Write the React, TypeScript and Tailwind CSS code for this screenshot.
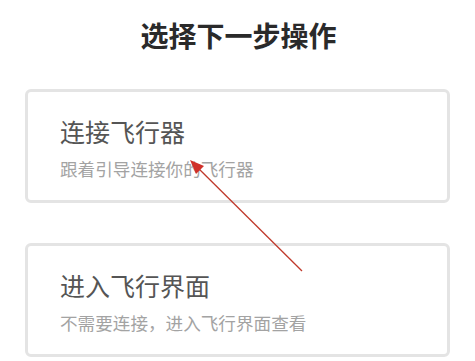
import React from 'react';

interface Option {
  title: string;
  desc: string;
}

const options: Option[] = [
  { title: '连接飞行器', desc: '跟着引导连接你的飞行器' },
  { title: '进入飞行界面', desc: '不需要连接，进入飞行界面查看' },
];

const App: React.FC = () => {
  return (
    <div
      className="relative w-[475px] h-[361px] bg-white overflow-hidden"
      style={{ fontFamily: '"Noto Sans CJK SC", "Noto Sans", sans-serif' }}
    >
      <h1 className="pt-[17px] text-center text-[28px] leading-[36px] font-bold text-[#2a2a2a] pl-[2px]">
        选择下一步操作
      </h1>

      <div className="mt-[36px] px-[25px] flex flex-col gap-[40px]">
        {options.map((opt) => (
          <div
            key={opt.title}
            className="h-[114px] border-[3px] border-[#e4e4e4] rounded-[6px] bg-white pl-[32px] pt-[23px]"
          >
            <div className="text-[25px] leading-[33px] text-[#555555]">{opt.title}</div>
            <div className="mt-[9px] text-[17.6px] leading-[24px] text-[#a3a3a3]">{opt.desc}</div>
          </div>
        ))}
      </div>

      {/* red annotation arrow */}
      <svg className="absolute left-0 top-0 pointer-events-none" width="475" height="361">
        <line x1="302" y1="271" x2="194" y2="164" stroke="#c0392b" strokeWidth="1.3" />
        <polygon points="190,160 204,166 196,174" fill="#d0302a" />
      </svg>
    </div>
  );
};

export default App;
